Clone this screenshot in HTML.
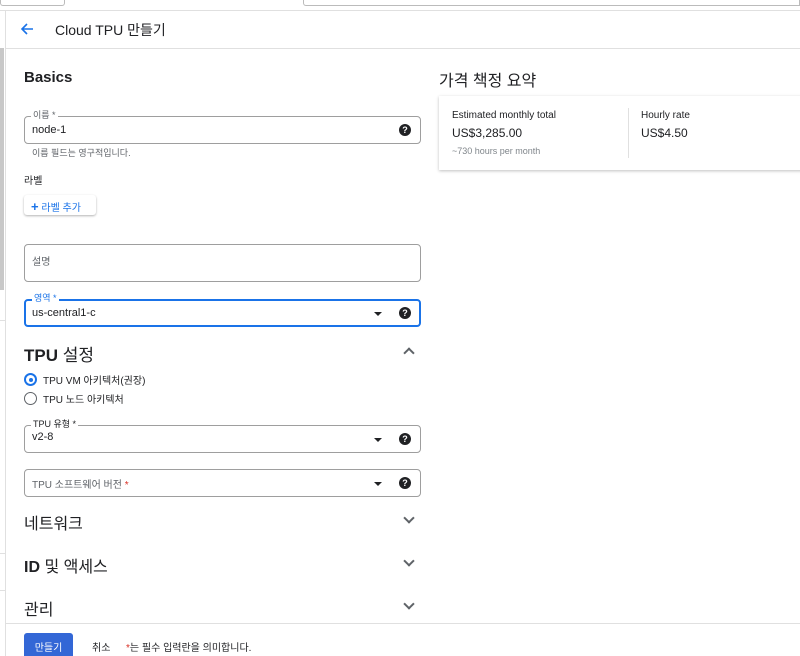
<!DOCTYPE html>
<html><head><meta charset="utf-8"><style>
*{box-sizing:border-box;margin:0;padding:0}
body{width:800px;height:656px;overflow:hidden;background:#fff;font-family:"Liberation Sans","Noto Sans CJK KR",sans-serif;color:#202124;position:relative}
.a{position:absolute}
.fld{position:absolute;left:24px;width:397px;border:1px solid #9e9e9e;border-radius:4px;height:28px}
.lbl{position:absolute;top:-7px;left:6px;background:#fff;padding:0 2px;font-size:9px;color:#5f6368;line-height:11px}
.val{position:absolute;left:7px;top:7px;font-size:11px;color:#202124}
.q{position:absolute;right:9px;top:7px;width:12px;height:12px;border-radius:50%;background:#202124;color:#fff;font-size:9px;font-weight:bold;text-align:center;line-height:12px}
.dd{position:absolute;right:38px;top:12px;width:0;height:0;border-left:4px solid transparent;border-right:4px solid transparent;border-top:4px solid #202124}
.sec{position:absolute;left:24px;font-size:16px;color:#202124}
.chev{position:absolute;left:405px;width:8px;height:8px;border-right:2px solid #5f6368;border-bottom:2px solid #5f6368;transform:rotate(45deg)}
</style></head><body>
<div class="a" style="left:0;top:0;width:65px;height:6px;border:1px solid #bbb;border-top:none;border-radius:0 0 3px 3px"></div>
<div class="a" style="left:303px;top:0;width:497px;height:6px;border:1px solid #bbb;border-top:none;border-radius:0 0 0 3px"></div>
<div class="a" style="left:0;top:10px;width:800px;height:1px;background:#e0e0e0"></div>
<div class="a" style="left:5px;top:10px;width:1px;height:646px;background:#e0e0e0"></div>
<div class="a" style="left:0;top:48px;width:4px;height:242px;background:#c8c8c8"></div>
<div class="a" style="left:0;top:320px;width:5px;height:1px;background:#e0e0e0"></div>
<div class="a" style="left:0;top:553px;width:5px;height:1px;background:#e0e0e0"></div>
<div class="a" style="left:0;top:590px;width:5px;height:1px;background:#e0e0e0"></div>
<svg class="a" style="left:20px;top:22px" width="14" height="14" viewBox="0 0 14 14"><path d="M13 7H2M7 2L2 7l5 5" stroke="#1a73e8" stroke-width="1.6" fill="none"/></svg>
<div class="a" style="left:55px;top:20px;font-size:14px">Cloud TPU 만들기</div>
<div class="a" style="left:6px;top:48px;width:794px;height:1px;background:#e0e0e0"></div>

<div class="a" style="left:24px;top:69px;font-size:15px;font-weight:bold">Basics</div>
<div class="fld" style="top:116px"><span class="lbl">이름 *</span><span class="val">node-1</span><span class="q">?</span></div>
<div class="a" style="left:32px;top:146px;font-size:9px;color:#5f6368">이름 필드는 영구적입니다.</div>
<div class="a" style="left:24px;top:172px;font-size:10px">라벨</div>
<div class="a" style="left:24px;top:195px;width:72px;height:20px;border-radius:3px;box-shadow:0 1px 2px rgba(0,0,0,.3);font-size:10px;color:#1a73e8;padding:4px 0 0 7px"><b style="font-size:13px;line-height:10px">+</b> 라벨 추가</div>
<div class="fld" style="top:244px;height:38px"><span class="val" style="top:8px;font-size:10px;color:#5f6368">설명</span></div>
<div class="fld" style="top:299px;border:2px solid #1a73e8"><span class="lbl" style="color:#1a73e8;top:-8px">영역 *</span><span class="val" style="top:6px;left:6px">us-central1-c</span><span class="dd" style="top:11px;right:37px"></span><span class="q" style="top:6px;right:8px">?</span></div>
<div class="sec" style="top:341px;font-size:17px"><b>TPU</b> 설정</div>
<div class="chev" style="top:349px;transform:rotate(-135deg)"></div>
<div class="a" style="left:24px;top:373px;width:13px;height:13px;border:2px solid #1a73e8;border-radius:50%"><div style="margin:2.5px;width:4px;height:4px;border-radius:50%;background:#1a73e8"></div></div>
<div class="a" style="left:43px;top:372px;font-size:10px">TPU VM 아키텍처(권장)</div>
<div class="a" style="left:24px;top:392px;width:13px;height:13px;border:1.5px solid #5f6368;border-radius:50%"></div>
<div class="a" style="left:43px;top:391px;font-size:10px">TPU 노드 아키텍처</div>
<div class="fld" style="top:425px"><span class="lbl" style="color:#202124">TPU 유형 *</span><span class="val" style="top:5px">v2-8</span><span class="dd"></span><span class="q">?</span></div>
<div class="fld" style="top:469px"><span class="val" style="font-size:10px;color:#5f6368;top:6px">TPU 소프트웨어 버전 <span style="color:#d93025">*</span></span><span class="dd"></span><span class="q">?</span></div>
<div class="sec" style="top:510px">네트워크</div><div class="chev" style="top:514px"></div>
<div class="sec" style="top:553px"><b>ID</b> 및 액세스</div><div class="chev" style="top:557px"></div>
<div class="sec" style="top:596px">관리</div><div class="chev" style="top:600px"></div>
<div class="a" style="left:6px;top:623px;width:794px;height:1px;background:#e0e0e0"></div>
<div class="a" style="left:24px;top:633px;width:49px;height:23px;background:#3367d6;border-radius:3px 3px 0 0;color:#fff;font-size:10px;text-align:center;padding-top:6px">만들기</div>
<div class="a" style="left:92px;top:639px;font-size:10px">취소</div>
<div class="a" style="left:126px;top:639px;font-size:10px"><span style="color:#d93025">*</span>는 필수 입력란을 의미합니다.</div>

<div class="a" style="left:439px;top:67px;font-size:16px">가격 책정 요약</div>
<div class="a" style="left:439px;top:96px;width:370px;height:74px;box-shadow:0 1px 3px rgba(0,0,0,.25)"></div>
<div class="a" style="left:628px;top:108px;width:1px;height:50px;background:#e0e0e0"></div>
<div class="a" style="left:452px;top:110px;font-size:10px">Estimated monthly total</div>
<div class="a" style="left:452px;top:126px;font-size:12px">US$3,285.00</div>
<div class="a" style="left:452px;top:146px;font-size:9px;color:#80868b">~730 hours per month</div>
<div class="a" style="left:641px;top:110px;font-size:10px">Hourly rate</div>
<div class="a" style="left:641px;top:126px;font-size:12px">US$4.50</div>
</body></html>
